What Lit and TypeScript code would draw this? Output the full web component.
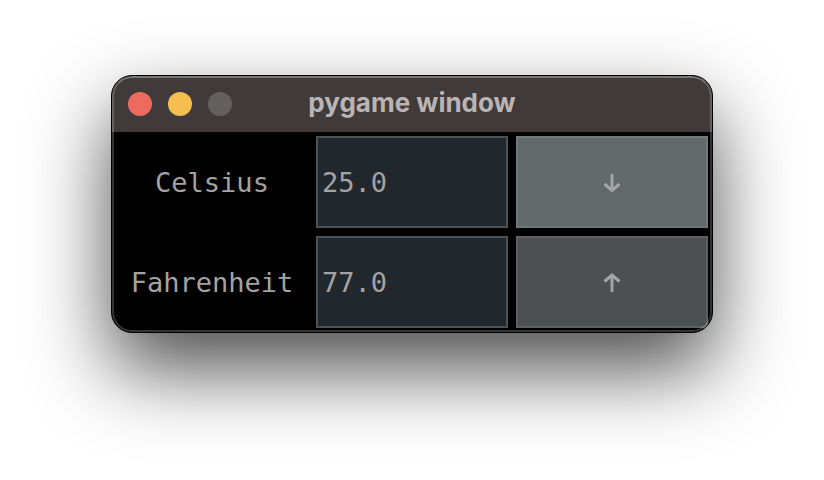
import { LitElement, html, css, svg } from "lit";
import { customElement, state } from "lit/decorators.js";

@customElement("app-root")
export class AppRoot extends LitElement {
  @state() private celsius = "25.0";
  @state() private fahrenheit = "77.0";

  static styles = css`
    :host {
      display: block;
      background: #fff;
      padding: 75px 111px 147px;
      overflow: hidden;
    }
    *,
    *::after {
      box-sizing: border-box;
    }
    .window {
      position: relative;
      border: 1px solid #000;
      border-radius: 21px;
      background: #000;
      overflow: hidden;
      box-shadow: 0 36px 80px rgba(0, 0, 0, 0.7);
    }
    .window::after {
      content: "";
      position: absolute;
      inset: 0;
      border: 2px solid rgba(255, 255, 255, 0.2);
      border-top-color: rgba(255, 255, 255, 0.3);
      border-radius: 20px;
      pointer-events: none;
    }
    .titlebar {
      display: grid;
      grid-template-columns: 1fr auto 1fr;
      align-items: center;
      height: 56px;
      padding: 0 16px;
      background: #403b3a;
    }
    .lights {
      display: flex;
      gap: 16px;
    }
    .light {
      width: 24px;
      height: 24px;
      padding: 0;
      border: 0;
      border-radius: 50%;
    }
    .close {
      background: #ed6a5e;
    }
    .minimise {
      background: #f5bf4f;
    }
    .zoom {
      background: #646060;
    }
    .title {
      margin: 0;
      color: #bab4b4;
      font: 700 26px/52px Inter, "Liberation Sans", sans-serif;
      padding-bottom: 2px;
    }
    .grid {
      display: grid;
      grid-template-columns: repeat(3, minmax(0, 1fr));
      grid-auto-rows: 92px;
      gap: 8px;
      padding: 4px;
      color: #a3a3a3;
      font: 27px/32px "DejaVu Sans Mono", "Liberation Mono", monospace;
    }
    .label {
      display: flex;
      align-items: center;
      justify-content: center;
      padding-top: 2px;
    }
    .field,
    .convert {
      width: 100%;
      height: 100%;
      margin: 0;
      border: 2px solid #4c5153;
      border-radius: 0;
      outline: 0;
      font: inherit;
      color: inherit;
    }
    .field {
      padding: 0 4px;
      background: #21282d;
    }
    .convert {
      display: flex;
      align-items: center;
      justify-content: center;
      padding: 0;
      background: #4c5052;
      border-color: #5b6062;
    }
    .active {
      background: #63686a;
      border-color: #70787a;
    }
    .arrow {
      width: 24px;
      height: 24px;
      fill: none;
      stroke: #a3a5a5;
      stroke-width: 3;
    }
  `;

  private toFahrenheit() {
    this.fahrenheit = ((Number(this.celsius) * 9) / 5 + 32).toFixed(1);
  }

  private toCelsius() {
    this.celsius = (((Number(this.fahrenheit) - 32) * 5) / 9).toFixed(1);
  }

  private arrow(shape: unknown) {
    return html`<svg class="arrow" viewBox="0 0 24 24" aria-hidden="true">${shape}</svg>`;
  }

  render() {
    return html`
      <main class="window">
        <header class="titlebar">
          <div class="lights">
            <button class="light close" aria-label="Close"></button>
            <button class="light minimise" aria-label="Minimise"></button>
            <button class="light zoom" aria-label="Zoom" disabled></button>
          </div>
          <h1 class="title">pygame window</h1>
        </header>
        <div class="grid">
          <label class="label" for="celsius">Celsius</label>
          <input
            class="field"
            id="celsius"
            type="text"
            .value=${this.celsius}
            @input=${(e: Event) => (this.celsius = (e.target as HTMLInputElement).value)}
          />
          <button class="convert active" aria-label="Convert to Fahrenheit" @click=${this.toFahrenheit}>
            ${this.arrow(svg`<path d="M12 4V20M4.5 14L12 20.5L19.5 14" />`)}
          </button>
          <label class="label" for="fahrenheit">Fahrenheit</label>
          <input
            class="field"
            id="fahrenheit"
            type="text"
            .value=${this.fahrenheit}
            @input=${(e: Event) => (this.fahrenheit = (e.target as HTMLInputElement).value)}
          />
          <button class="convert" aria-label="Convert to Celsius" @click=${this.toCelsius}>
            ${this.arrow(svg`<path d="M12 22V5M4.5 11.500L12 5L19.500 11.500" />`)}
          </button>
        </div>
      </main>
    `;
  }
}
